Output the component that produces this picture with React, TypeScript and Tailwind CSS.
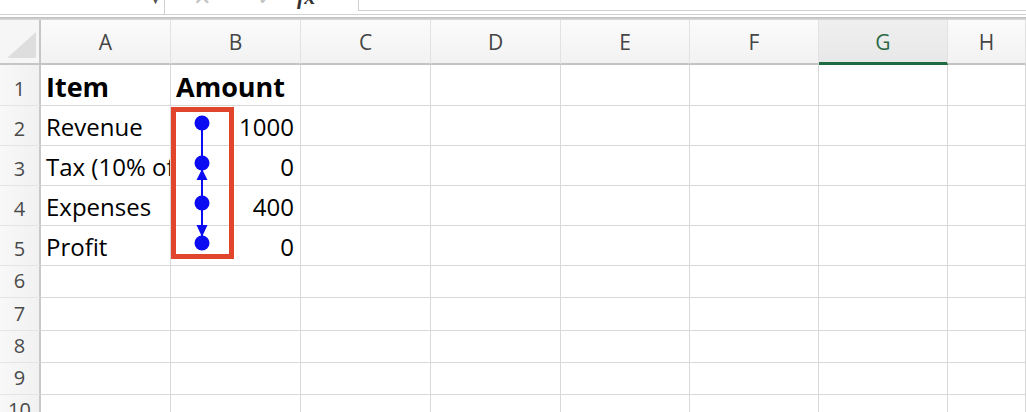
import React from 'react';

const colWidths = ['A', 'B', 'C', 'D', 'E', 'F', 'G', 'H'];
const rowHeights = [41, 40, 40, 40, 40, 32, 33, 32, 32, 32];

type Cell = { text: string; align?: 'left' | 'right'; bold?: boolean };

const data: Record<number, Record<string, Cell>> = {
  1: { A: { text: 'Item', bold: true }, B: { text: 'Amount', bold: true } },
  2: { A: { text: 'Revenue' }, B: { text: '1000', align: 'right' } },
  3: { A: { text: 'Tax (10% of' }, B: { text: '0', align: 'right' } },
  4: { A: { text: 'Expenses' }, B: { text: '400', align: 'right' } },
  5: { A: { text: 'Profit' }, B: { text: '0', align: 'right' } },
};

function TopBar() {
  return (
    <div className="flex h-[15px] overflow-hidden border-b border-[#d2d2d2] bg-white">
      <div className="relative w-[165px] border-r border-[#cfcfcf]">
        <span className="absolute left-[151px] top-[-4px] text-[9px] leading-none text-[#555]">▼</span>
      </div>
      <div className="relative w-[193px]">
        <span className="absolute left-[28px] top-[-15px] text-[22px] leading-none text-[#c4c4c4]">✕</span>
        <span className="absolute left-[92px] top-[-15px] text-[22px] leading-none text-[#c4c4c4]">✓</span>
        <span className="absolute left-[132px] top-[-14px] font-['Liberation_Serif',serif] text-[22px] italic font-bold leading-none text-[#333]">
          fx
        </span>
      </div>
      <div className="h-[11px] flex-1 border-b border-l border-[#d0d0d0]" />
    </div>
  );
}

function ColumnHeader({ letter }: { letter: string }) {
  const selected = letter === 'G';
  return (
    <div
      className={`flex items-center justify-center border-r border-[#e2e2e2] text-[21px] ${
        selected
          ? 'border-b-[3px] border-b-[#1f6b42] bg-gradient-to-b from-[#efefef] to-[#e8e8e8] text-[#2b6a45]'
          : 'border-b-2 border-b-[#c3c3c3] bg-gradient-to-b from-[#fbfbfb] to-[#f2f2f2] text-[#454545]'
      }`}
    >
      <span className="pt-[3px]">{letter}</span>
    </div>
  );
}

function Trace() {
  return (
    <svg className="absolute left-[171px] top-[87px]" width="63" height="152" viewBox="0 0 63 152">
      <line x1="31" y1="16" x2="31" y2="136" stroke="#0c0cf2" strokeWidth="2" />
      <polygon points="31,62 25.5,73 36.5,73" fill="#0c0cf2" />
      <polygon points="25.5,118 36.5,118 31,130" fill="#0c0cf2" />
      <circle cx="31" cy="16" r="7.5" fill="#0c0cf2" />
      <circle cx="31" cy="56" r="7.5" fill="#0c0cf2" />
      <circle cx="31" cy="96" r="7.5" fill="#0c0cf2" />
      <circle cx="31" cy="136" r="7.5" fill="#0c0cf2" />
    </svg>
  );
}

export default function App() {
  return (
    <div className="h-[412px] w-[1026px] overflow-hidden bg-white font-['Open_Sans','Liberation_Sans',sans-serif]">
      <TopBar />
      <div className="h-[2px] bg-white" />
      <div className="h-[3px] bg-gradient-to-b from-[#bdbdbd] to-[#dcdcdc]" />
      <div className="relative">
        <div className="grid grid-cols-[41px_130px_130px_130px_130px_129px_129px_129px_1fr] grid-rows-[45px_41px_40px_40px_40px_40px_32px_33px_32px_32px_32px]">
          <div className="relative border-b-2 border-r-2 border-[#c6c6c6] bg-[#f6f6f6]">
            <svg className="absolute left-[7px] top-[12px]" width="30" height="27" viewBox="0 0 30 27">
              <polygon points="29,0 29,26 0,26" fill="#dedede" />
            </svg>
          </div>
          {colWidths.map((c) => (
            <ColumnHeader key={c} letter={c} />
          ))}
          {rowHeights.map((_, i) => {
            const row = i + 1;
            return (
              <React.Fragment key={row}>
                <div className="flex items-end justify-center border-b border-r-2 border-b-[#e4e4e4] border-r-[#c8c8c8] bg-gradient-to-r from-[#f8f8f8] to-[#f1f1f1] pb-[2px] text-[20px] leading-[28px] text-[#4a4a4a]">
                  {row}
                </div>
                {colWidths.map((c) => {
                  const cell = data[row]?.[c];
                  return (
                    <div
                      key={c}
                      className={`flex min-w-0 items-end overflow-hidden whitespace-nowrap border-b border-r border-[#d8d8d8] ${
                        cell?.align === 'right' ? 'justify-end pr-[6px]' : 'justify-start pl-[5px]'
                      } ${cell?.bold ? 'pb-0 text-[27px] font-bold leading-[36px]' : 'pb-[3px] text-[24px] leading-[31px]'} text-black`}
                    >
                      {cell && <span>{cell.text}</span>}
                    </div>
                  );
                })}
              </React.Fragment>
            );
          })}
        </div>
        <div className="absolute left-[171px] top-[87px] h-[152px] w-[63px] border-[5px] border-[#e1452b]" />
        <Trace />
      </div>
    </div>
  );
}
